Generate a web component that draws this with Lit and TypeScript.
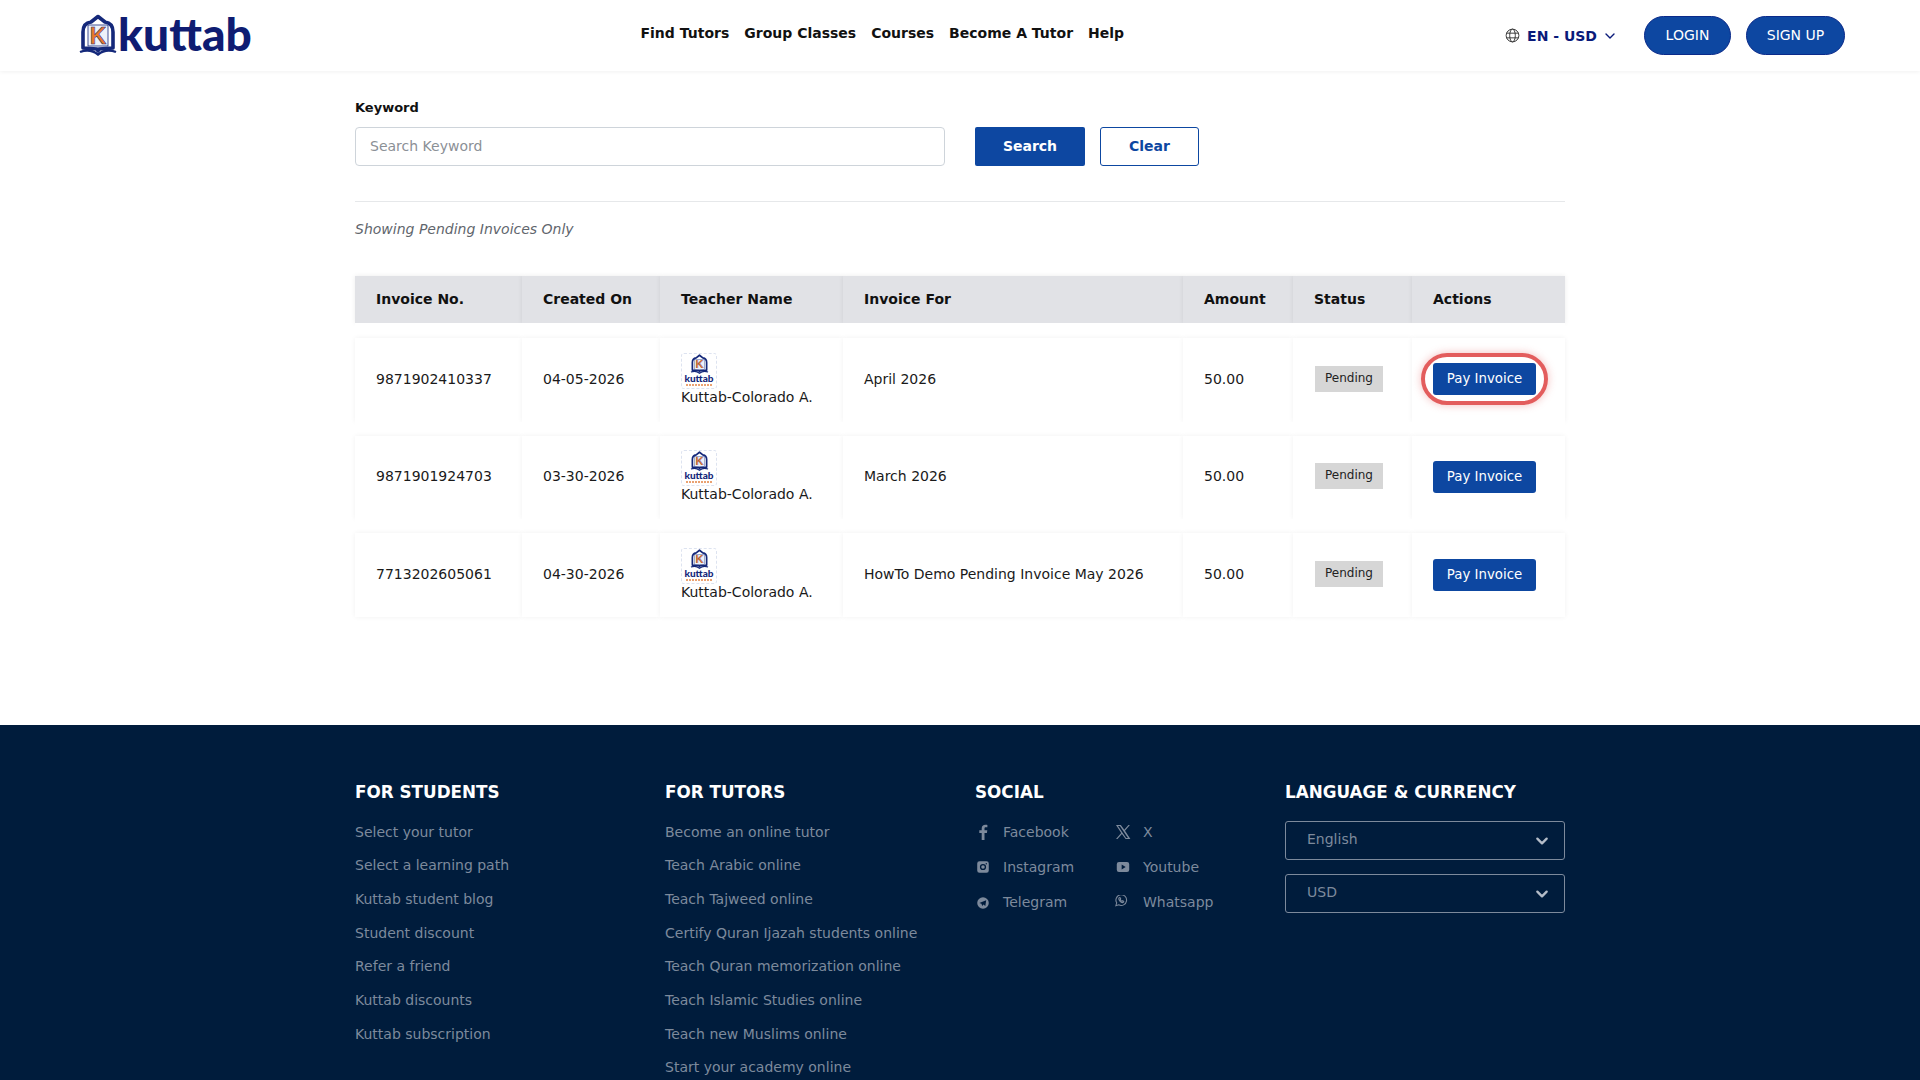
import { LitElement, html, css, svg } from "lit";
import { customElement } from "lit/decorators.js";

const mark = svg`
  <path d="M20 2.500 L27 8 Q35 9 35 18 L35 34 L21 35 L20 37 L19 35 L5 34 L5 18 Q5 9 13 8 Z" fill="none" stroke="#14287a" stroke-width="3.600" stroke-linejoin="round"/>
  <path d="M2 38 Q12 34 20 40.500 Q28 34 38 38" fill="none" stroke="#14287a" stroke-width="2.400"/>
  <rect x="10" y="11" width="20" height="21" fill="#eef2fa" stroke="#14287a" stroke-width=".8"/>
  <text x="20" y="30" text-anchor="middle" font-family="Liberation Sans, sans-serif" font-weight="700" font-size="23" fill="#e8792a" stroke="#14287a" stroke-width=".5">K</text>`;

const rows = [
  ["9871902410337", "04-05-2026", "April 2026", true],
  ["9871901924703", "03-30-2026", "March 2026", false],
  ["7713202605061", "04-30-2026", "HowTo Demo Pending Invoice May 2026", false],
] as const;

const students = ["Select your tutor", "Select a learning path", "Kuttab student blog", "Student discount", "Refer a friend", "Kuttab discounts", "Kuttab subscription"];
const tutors = ["Become an online tutor", "Teach Arabic online", "Teach Tajweed online", "Certify Quran Ijazah students online", "Teach Quran memorization online", "Teach Islamic Studies online", "Teach new Muslims online", "Start your academy online"];

const social = [
  ["Facebook", "0 0 16 16", svg`<path d="M9.500 16V9h2.400l.4-2.700H9.500V4.600c0-.8.3-1.300 1.400-1.300h1.500V.9C12.100.8 11.300.8 10.400.8 8.200.8 6.700 2.100 6.700 4.400v1.900H4.300V9h2.400v7z"/>`],
  ["X", "0 0 16 16", svg`<path fill-rule="evenodd" d="M1 1h4.800l3.500 4.800L13.400 1h1.500L10 6.700 15.400 15h-4.800L6.900 9.900 2.500 15H1l5.200-6.100zM3 2l8.100 12h1.900L4.900 2z"/>`],
  ["Instagram", "-1 -1 18 18", svg`<path fill-rule="evenodd" d="M4 1.500h8A2.500 2.500 0 0 1 14.500 4v8a2.500 2.500 0 0 1-2.500 2.500H4A2.500 2.500 0 0 1 1.500 12V4A2.500 2.500 0 0 1 4 1.500zM8 4.500a3.500 3.500 0 1 0 0 7 3.500 3.500 0 0 0 0-7zm0 1.500a2 2 0 1 1 0 4 2 2 0 0 1 0-4zm3.700-2.500a.8.800 0 1 0 0 1.600.8.800 0 0 0 0-1.600z"/>`],
  ["Youtube", "-1 -1 18 18", svg`<path fill-rule="evenodd" d="M3.500 2.500h9A2.500 2.500 0 0 1 15 5v6a2.500 2.500 0 0 1-2.500 2.500h-9A2.500 2.500 0 0 1 1 11V5a2.500 2.500 0 0 1 2.500-2.500zM6.500 5.200v5.600L11 8z"/>`],
  ["Telegram", "-1 -1 18 18", svg`<path fill-rule="evenodd" d="M8 1.500a6.500 6.500 0 1 1 0 13 6.500 6.500 0 0 1 0-13zM11.600 5 3.900 8l2.400.8.800 2.700 1.400-1.700 2.100 1.500z"/>`],
  ["Whatsapp", "1 2 18 18", svg`<path fill="none" stroke="currentColor" stroke-width="1.200" d="M2 14l.9-3.200A6 6 0 1 1 5.200 13zM5.800 5c-.9 1 -.5 2.400.7 3.800 1.300 1.500 2.800 2.200 3.900 1.500.6-.4.500-1 .2-1.200l-1.100-.6-.6.600c-.7-.2-1.700-1.200-2-2l.5-.6-.5-1.400c-.2-.3-.6-.3-1.100-.1z"/>`],
] as const;

@customElement("app-root")
export class AppRoot extends LitElement {
  static styles = css`
    :host { display: block; font-family: "DejaVu Sans", sans-serif; color: #212529; background: #fff; }
    * { box-sizing: border-box; }
    header { height: 71px; display: grid; grid-template-columns: 640.500px 1fr auto; align-items: center; box-shadow: 0 1px 4px rgba(0,0,0,.06); position: relative; padding-right: 75px; }
    .brand { display: flex; align-items: center; padding-left: 78px; height: 71px; }
    .brand svg { width: 40px; height: 42px; margin-top: -1px; }
    .brand span { font: 900 46px/1 Lato, sans-serif; color: #0f1c72; margin-top: -3px; }
    nav { display: flex; gap: 15px; font-size: 14px; font-weight: 700; color: #111; margin-top: -5px; }
    .hright { display: flex; align-items: center; }
    .lang { display: flex; align-items: center; font-size: 14px; font-weight: 700; color: #0a1a7a; margin-right: 28px; }
    .lang .globe { margin-right: 7px; color: #333; }
    .lang .chev { margin-left: 7px; }
    .pill { height: 39px; border-radius: 20px; background: #0d47a1; border: 1px solid #0a2a8a; color: #fff; font-size: 14px; display: flex; align-items: center; justify-content: center; padding-bottom: 1px; }
    .pill.login { width: 87px; margin-right: 15px; }
    .pill.signup { width: 99px; }

    main { width: 1210px; margin: 0 auto; height: 654px; padding-top: 29px; }
    label { display: block; font-size: 13px; font-weight: 700; color: #111; line-height: 16px; margin-bottom: 11px; }
    .search { display: flex; align-items: center; height: 39px; }
    .input { width: 590px; height: 39px; border: 1px solid #ced4da; border-radius: 4px; padding: 0 0 2px 14px; font-size: 14px; color: #8b9096; display: flex; align-items: center; margin-right: 30px; }
    .btn { height: 39px; border-radius: 2px; display: flex; align-items: center; justify-content: center; font-size: 14px; font-weight: 700; padding-bottom: 1px; }
    .btn.s { width: 110px; background: #0d47a1; color: #fff; margin-right: 15px; }
    .btn.c { width: 99px; border: 1px solid #0d47a1; color: #0d47a1; border-radius: 3px; }
    hr { border: 0; border-top: 1px solid #e6e8ea; margin: 35px 0 0; }
    .note { font-size: 14px; font-style: italic; color: #5f666d; line-height: 17px; margin: 19px 0 38px; }

    table { width: 1210px; table-layout: fixed; border-collapse: separate; border-spacing: 0; font-size: 14px; color: #1a1a1a; }
    th { background: #e1e2e6; height: 47px; text-align: left; font-weight: 700; color: #111; padding: 0 0 2px 21px; box-shadow: 0 0 5px rgba(0,0,0,.08); }
    .gap td { height: 15px; padding: 0; box-shadow: none; }
    .gap.g2 td { height: 14px; }
    td { height: 83.500px; padding: 0 0 2px 21px; background: #fff; box-shadow: 0 0 5px rgba(0,0,0,.06); }
    td.tch { line-height: 17px; padding-bottom: 1px; }
    td.act { padding-bottom: 0; }
    .thumb { width: 36px; height: 36px; display: block; border: 1px dashed #dde3f0; border-radius: 3px; padding-top: 0; }
    .thumb svg { display: block; margin: 0 auto; width: 19px; height: 20px; }
    .thumb b { display: block; width: 34px; text-align: center; font: 900 10px/9px Lato, sans-serif; color: #14287a; }
    .thumb i { display: block; height: 2px; width: 26px; margin: 1px auto 0; background: repeating-linear-gradient(90deg,#eaa272 0 2px,#fff 2px 3px); }
    .badge { display: inline-flex; width: 68px; height: 26px; margin-left: 1px; background: #d6d6d6; color: #222; font-size: 12px; align-items: center; justify-content: center; padding-bottom: 2px; }
    .pay { display: inline-flex; position: relative; width: 103px; height: 32px; background: #0d47a1; color: #fff; font-size: 13.333px; border-radius: 3px; align-items: center; justify-content: center; padding-bottom: 1px; }
    .pay.hl { top: -1px; }
    .pay.hl::after { content: ""; position: absolute; inset: -10px -12px; border: 4px solid #e35d5d; border-radius: 26px; box-shadow: 0 0 8px rgba(227,93,93,.4); }

    footer { background: #001c3c; padding: 56px 355px 0; height: 355px; overflow: hidden; display: grid; grid-template-columns: repeat(4, 280px); column-gap: 30px; color: #7d8a9c; font-size: 14px; }
    h4 { margin: 0 0 20.500px; font-size: 16.800px; line-height: 22px; font-weight: 700; color: #fff; }
    .links { display: flex; flex-direction: column; gap: 16.700px; line-height: 17px; }
    .social { display: grid; grid-template-columns: 140px 1fr; row-gap: 18.300px; margin-top: 4px; }
    .si { display: flex; align-items: center; line-height: 17px; height: 17px; }
    .si svg { width: 16px; height: 16px; fill: currentColor; margin: 0 12px 0 0; flex: none; }
    .sel { height: 39px; border: 1px solid #7d8a9c; border-radius: 3px; display: flex; align-items: center; justify-content: space-between; padding: 0 15px 2px 21px; margin-bottom: 14px; }
    .sel:first-of-type { margin-top: -3px; }
    .sel svg { margin-top: 4px; }
  `;

  private chev(size: number, color: string, sw: number) {
    return html`<svg class="chev" width=${size} height=${size} viewBox="0 0 12 12" fill="none" stroke=${color} stroke-width=${sw} stroke-linecap="round" stroke-linejoin="round"><path d="M2 4l4 4 4-4"/></svg>`;
  }

  private thumb() {
    return html`<div class="thumb"><svg viewBox="0 0 40 42">${mark}</svg><b>kuttab</b><i></i></div>`;
  }

  render() {
    return html`
      <header>
        <div class="brand"><svg viewBox="0 0 40 42">${mark}</svg><span>kuttab</span></div>
        <nav><span>Find Tutors</span><span>Group Classes</span><span>Courses</span><span>Become A Tutor</span><span>Help</span></nav>
        <div class="hright">
          <div class="lang">
            <svg class="globe" width="15" height="15" viewBox="0 0 16 16" fill="none" stroke="currentColor" stroke-width="1"><circle cx="8" cy="8" r="6.800"/><ellipse cx="8" cy="8" rx="3" ry="6.800"/><path d="M1.500 5.500h13M1.500 10.500h13"/></svg>
            <span>EN - USD</span>${this.chev(12, "#0a1a7a", 1.4)}
          </div>
          <div class="pill login">LOGIN</div>
          <div class="pill signup">SIGN UP</div>
        </div>
      </header>
      <main>
        <label>Keyword</label>
        <div class="search">
          <div class="input">Search Keyword</div>
          <div class="btn s">Search</div>
          <div class="btn c">Clear</div>
        </div>
        <hr />
        <div class="note">Showing Pending Invoices Only</div>
        <table>
          <colgroup><col style="width:167px"/><col style="width:138px"/><col style="width:183px"/><col style="width:340px"/><col style="width:110px"/><col style="width:119px"/><col style="width:153px"/></colgroup>
          <thead><tr><th>Invoice No.</th><th>Created On</th><th>Teacher Name</th><th>Invoice For</th><th>Amount</th><th>Status</th><th>Actions</th></tr></thead>
          <tbody>
            ${rows.map((r, i) => html`
              <tr class="gap ${i ? "g2" : ""}"><td colspan="7"></td></tr>
              <tr>
                <td>${r[0]}</td><td>${r[1]}</td>
                <td class="tch">${this.thumb()}Kuttab-Colorado A.</td>
                <td>${r[2]}</td><td>50.00</td>
                <td><span class="badge">Pending</span></td>
                <td class="act"><span class="pay ${r[3] ? "hl" : ""}">Pay Invoice</span></td>
              </tr>`)}
          </tbody>
        </table>
      </main>
      <footer>
        <div><h4>FOR STUDENTS</h4><div class="links">${students.map((s) => html`<span>${s}</span>`)}</div></div>
        <div><h4>FOR TUTORS</h4><div class="links">${tutors.map((s) => html`<span>${s}</span>`)}</div></div>
        <div><h4>SOCIAL</h4><div class="social">${social.map(([n, vb, p]) => html`<div class="si"><svg viewBox=${vb}>${p}</svg><span>${n}</span></div>`)}</div></div>
        <div><h4>LANGUAGE &amp; CURRENCY</h4>
          <div class="sel"><span>English</span>${this.chev(14, "#b4bcc8", 2)}</div>
          <div class="sel"><span>USD</span>${this.chev(14, "#b4bcc8", 2)}</div>
        </div>
      </footer>
    `;
  }
}
